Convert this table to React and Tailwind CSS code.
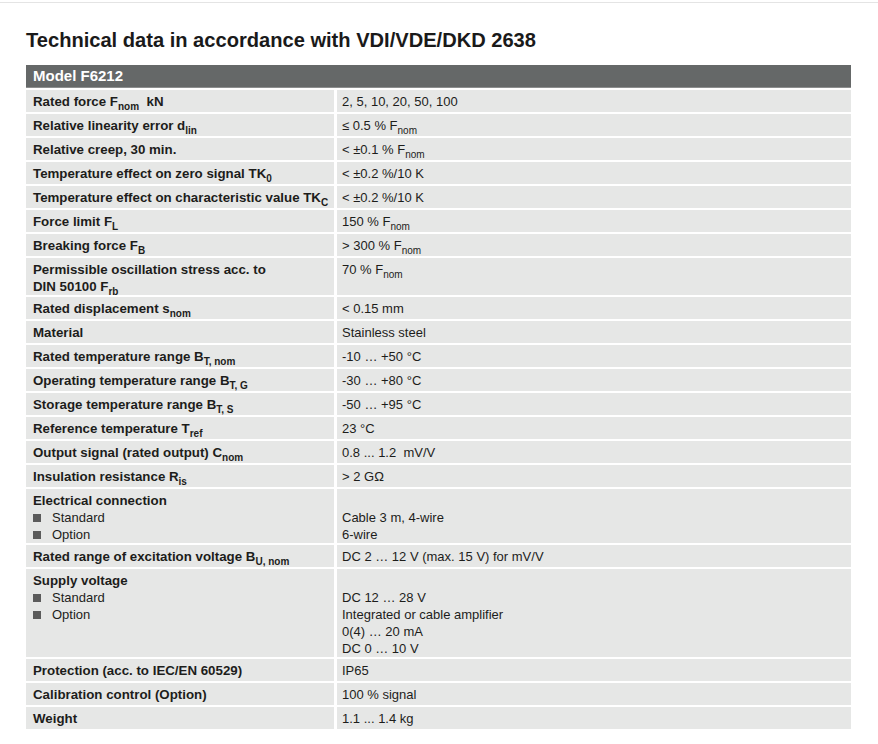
import React from "react";

const font = { fontFamily: '"Liberation Sans", Arial, sans-serif' };

// subscript helper
function S({ children }) {
  return <sub className="text-[10px] bottom-[-0.4em]">{children}</sub>;
}

function Bullet({ children }) {
  return (
    <div className="flex items-center">
      <span className="inline-block w-[8px] h-[8px] bg-[#5b5b5b] mr-[11px]" />
      <span className="font-normal text-[13px]">{children}</span>
    </div>
  );
}

const ROWS = [
  { label: <>Rated force F<S>nom</S>&nbsp; kN</>, value: "2, 5, 10, 20, 50, 100" },
  { label: <>Relative linearity error d<S>lin</S></>, value: <>≤ 0.5 % F<S>nom</S></> },
  { label: "Relative creep, 30 min.", value: <>&lt; ±0.1 % F<S>nom</S></> },
  { label: <>Temperature effect on zero signal TK<S>0</S></>, value: "< ±0.2 %/10 K" },
  { label: <>Temperature effect on characteristic value TK<S>C</S></>, value: "< ±0.2 %/10 K" },
  { label: <>Force limit F<S>L</S></>, value: <>150 % F<S>nom</S></> },
  { label: <>Breaking force F<S>B</S></>, value: <>&gt; 300 % F<S>nom</S></> },
  {
    label: <>Permissible oscillation stress acc. to<br />DIN 50100 F<S>rb</S></>,
    value: <>70 % F<S>nom</S></>,
  },
  { label: <>Rated displacement s<S>nom</S></>, value: "< 0.15 mm" },
  { label: "Material", value: "Stainless steel" },
  { label: <>Rated temperature range B<S>T, nom</S></>, value: "-10 … +50 °C" },
  { label: <>Operating temperature range B<S>T, G</S></>, value: "-30 … +80 °C" },
  { label: <>Storage temperature range B<S>T, S</S></>, value: "-50 … +95 °C" },
  { label: <>Reference temperature T<S>ref</S></>, value: "23 °C" },
  { label: <>Output signal (rated output) C<S>nom</S></>, value: "0.8 ... 1.2\u00a0 mV/V" },
  { label: <>Insulation resistance R<S>is</S></>, value: "> 2 GΩ" },
  {
    label: (
      <>
        <div>Electrical connection</div>
        <Bullet>Standard</Bullet>
        <Bullet>Option</Bullet>
      </>
    ),
    value: (
      <>
        <div>&nbsp;</div>
        <div>Cable 3 m, 4-wire</div>
        <div>6-wire</div>
      </>
    ),
  },
  { label: <>Rated range of excitation voltage B<S>U, nom</S></>, value: "DC 2 … 12 V (max. 15 V) for mV/V" },
  {
    label: (
      <>
        <div>Supply voltage</div>
        <Bullet>Standard</Bullet>
        <Bullet>Option</Bullet>
      </>
    ),
    value: (
      <>
        <div>&nbsp;</div>
        <div>DC 12 … 28 V</div>
        <div>Integrated or cable amplifier</div>
        <div>0(4) … 20 mA</div>
        <div>DC 0 … 10 V</div>
      </>
    ),
  },
  { label: "Protection (acc. to IEC/EN 60529)", value: "IP65" },
  { label: "Calibration control (Option)", value: "100 % signal" },
  { label: "Weight", value: "1.1 ... 1.4 kg" },
];

export default function App() {
  return (
    <div className="min-h-screen bg-white text-[#1d1d1b]" style={font}>
      <div className="pt-[2px]">
        <div className="h-px bg-[#e4e4e4]" />
      </div>

      <div className="px-[26px] pt-[25px]">
        <h1 className="text-[20.1px] leading-[24px] font-bold text-[#1a1a1a]">
          Technical data in accordance with VDI/VDE/DKD 2638
        </h1>

        <div className="mt-[13px] w-[825px]">
          <div className="h-[23px] bg-[#656868] border-b border-[#8c8e8e] text-white font-bold text-[15px] leading-[22px] px-[7px]">
            Model F6212
          </div>

          <div className="mt-[2px] grid grid-cols-[308px_1fr] gap-x-[3px] gap-y-[2px] text-[13px] leading-[17px]">
            {ROWS.map((r, i) => (
              <React.Fragment key={i}>
                <div className="bg-[#e6e7e6] min-h-[22px] pl-[7px] pr-1 pt-[3px] font-bold text-[13.3px]">
                  {r.label}
                </div>
                <div className="bg-[#e6e7e6] min-h-[22px] pl-[5px] pr-1 pt-[3px]">
                  {r.value}
                </div>
              </React.Fragment>
            ))}
          </div>
        </div>
      </div>
    </div>
  );
}
